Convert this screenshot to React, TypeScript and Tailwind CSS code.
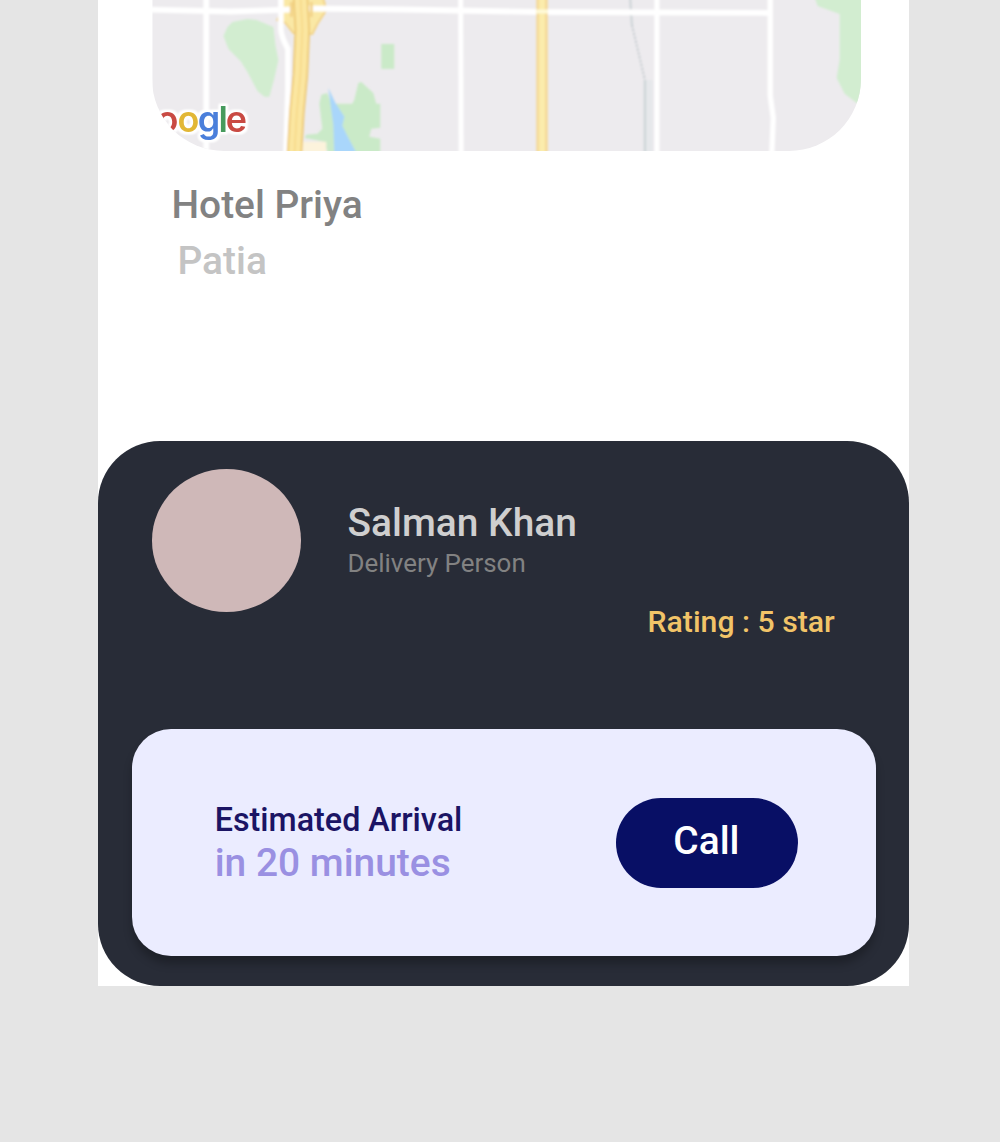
function MapView() {
  return (
    <svg viewBox="0 0 709.5 151.5" className="block h-full w-full" aria-label="Map">
      <defs>
        <filter id="soft" x="-5%" y="-5%" width="110%" height="110%">
          <feGaussianBlur stdDeviation="0.85" />
        </filter>
        <filter id="halo" x="-10%" y="-20%" width="120%" height="140%" colorInterpolationFilters="sRGB">
          <feMorphology in="SourceAlpha" operator="dilate" radius="2" result="grown" />
          <feGaussianBlur in="grown" stdDeviation="0.9" result="edge" />
          <feFlood floodColor="#fff" />
          <feComposite in2="edge" operator="in" result="white" />
          <feGaussianBlur in="SourceGraphic" stdDeviation="0.6" result="letters" />
          <feMerge>
            <feMergeNode in="white" />
            <feMergeNode in="white" />
            <feMergeNode in="letters" />
          </feMerge>
        </filter>
      </defs>
      <rect width="710" height="152" fill="#edebee" />
      <g transform="translate(-151.9 0)" fill="none">
        <g filter="url(#soft)">
          <path d="M223 36L227 27L232 22L247 19L256 20L273 27L275 45L278 60L274 78L269 97L264 97L257 91L247 72L240 61L228 49Z" fill="#d2edd0" />
          <path d="M381 44H394V69H381Z" fill="#caeac8" />
          <path d="M319 104L321 95L327 93L331 104H352L354 100L358 83L361 82L373 93L376 104H380V128L371 129L369 137L380 139V155H328L324 142L304 138L306 135L317 134L322 129Z" fill="#caeac8" />
          <path d="M301 142H326V155H301Z" fill="#fcf3dc" />
          <path d="M328 88L335 103L344 117L342 126L348 138L357 155H334L333 125Z" fill="#a9d6fb" />
          <path d="M814 -5L818 6L840 14L840 60L837 78L845 94L858 104L870 100V-5Z" fill="#d2edd0" />
          <path d="M646 80H653V155H646Z" fill="#e6e8eb" />
          <path d="M630 -5L632 25" stroke="#d1d7da" strokeWidth="2.4" />
          <path d="M632 25L645 80" stroke="#c8cdd1" strokeWidth="2" strokeDasharray="2.5 1.500" />
          <path d="M645 80V155" stroke="#ced6d8" strokeWidth="2.400" />
          <path d="M281 -5L280 14L277 20L285 23L293 33L312 34L317 24L326 10L322 -5Z" fill="#fae8a5" stroke="#f3d48a" strokeWidth="2" />
          <g stroke="#fff">
            <path d="M145 9.500L230 11.500L292 9.500M308 8.500L400 9.500L540 12L770 13" strokeWidth="5.800" />
            <path d="M205.700 -5V155" strokeWidth="5.800" />
            <path d="M280.500 -5V30Q281 37 287.500 49V90L285.500 155" strokeWidth="5.600" />
            <path d="M460.500 -5L461 155" strokeWidth="5" />
            <path d="M657 -5V155" strokeWidth="5.200" />
            <path d="M770.500 -5V96L773.500 118L772 155" strokeWidth="5.400" />
          </g>
          <path d="M291 2V17M311 2V17" stroke="#f3d48a" strokeWidth="3" />
          <path d="M300 -5L302 30L300 75L296.500 112L294 155" stroke="#edc873" strokeWidth="15.500" />
          <path d="M300 -5L302 30L300 75L296.500 112L294 155" stroke="#fbe6a0" strokeWidth="12" />
          <path d="M300 -5L302 30L300 75L296.500 112L294 155" stroke="#f6d988" strokeWidth="1.5" />
          <path d="M542 -5V155" stroke="#f5d999" strokeWidth="11.500" />
          <path d="M542 -5V155" stroke="#fbecac" strokeWidth="6" />
          <path d="M536 11.500H548" stroke="#fffad8" strokeWidth="4" />
        </g>
        <text
          y="132"
          fontFamily="Inter, sans-serif"
          fontSize="36"
          fontWeight="600"
          textAnchor="middle"
          filter="url(#halo)"
        >
          <tspan x="167" fill="#c94a43">o</tspan>
          <tspan x="188" fill="#e2b735">o</tspan>
          <tspan x="208.500" fill="#4a7fdb">g</tspan>
          <tspan x="222.700" fill="#469a5d">l</tspan>
          <tspan x="236" fill="#c94a43">e</tspan>
        </text>
      </g>
    </svg>
  );
}

function Destination() {
  return (
    <section className="ml-[54px] mt-[31px] flex flex-col gap-[9.500px] pl-5 text-[38.900px] font-medium leading-[46px]">
      <h1 className="text-[#828282]">Hotel Priya</h1>
      <p className="pl-1.5 text-[#c4c4c4]">Patia</p>
    </section>
  );
}

function ArrivalCard() {
  return (
    <div className="ml-[34.500px] flex h-[227px] w-[744px] items-start justify-between rounded-[39px] bg-[#ebecff] pl-[82.700px] pr-[77.600px] pt-[69.300px] shadow-[0_8px_8px_rgba(0,0,0,0.25)]">
      <div className="font-medium">
        <p className="mt-[2.500px] text-[32.300px] leading-[38px] text-[#1b1464]">Estimated Arrival</p>
        <p className="mt-[1.500px] text-[38.900px] leading-[46px] text-[#9a90e2]">in 20 minutes</p>
      </div>
      <button className="flex h-[90px] w-[182px] justify-center rounded-full bg-[#080f65] pr-0.5 pt-5 text-[38.900px] font-medium leading-[46px] text-white">
        Call
      </button>
    </div>
  );
}

function DeliveryPanel() {
  return (
    <section className="mt-auto h-[545px] rounded-[62px] bg-[#282c37] pt-7">
      <div className="flex h-[259.500px] pl-[54px] pr-[74px]">
        <div className="h-[142.500px] w-[149px] shrink-0 rounded-[50%] bg-[#cfb8b8]" />
        <div className="flex-1 pl-[47px] pt-[31px]">
          <h2 className="text-[38.900px] font-medium leading-[46px] text-[#cfcfcf]">Salman Khan</h2>
          <p className="mt-[2px] text-[25.900px] leading-[30px] text-[#828282]">Delivery Person</p>
          <p className="mt-[26.500px] text-right text-[30.200px] font-medium leading-[34px] text-[#f2c468]">
            Rating : 5 star
          </p>
        </div>
      </div>
      <ArrivalCard />
    </section>
  );
}

export default function App() {
  return (
    <div className="h-[1142px] w-full overflow-hidden bg-[#e5e5e5] pl-[97.500px] font-[Roboto,sans-serif]">
      <main className="flex h-[986.300px] w-[811.200px] flex-col bg-white">
        <div className="ml-[54.200px] h-[151.300px] w-[709.500px] shrink-0 overflow-hidden rounded-b-[72px]">
          <MapView />
        </div>
        <Destination />
        <DeliveryPanel />
      </main>
    </div>
  );
}
